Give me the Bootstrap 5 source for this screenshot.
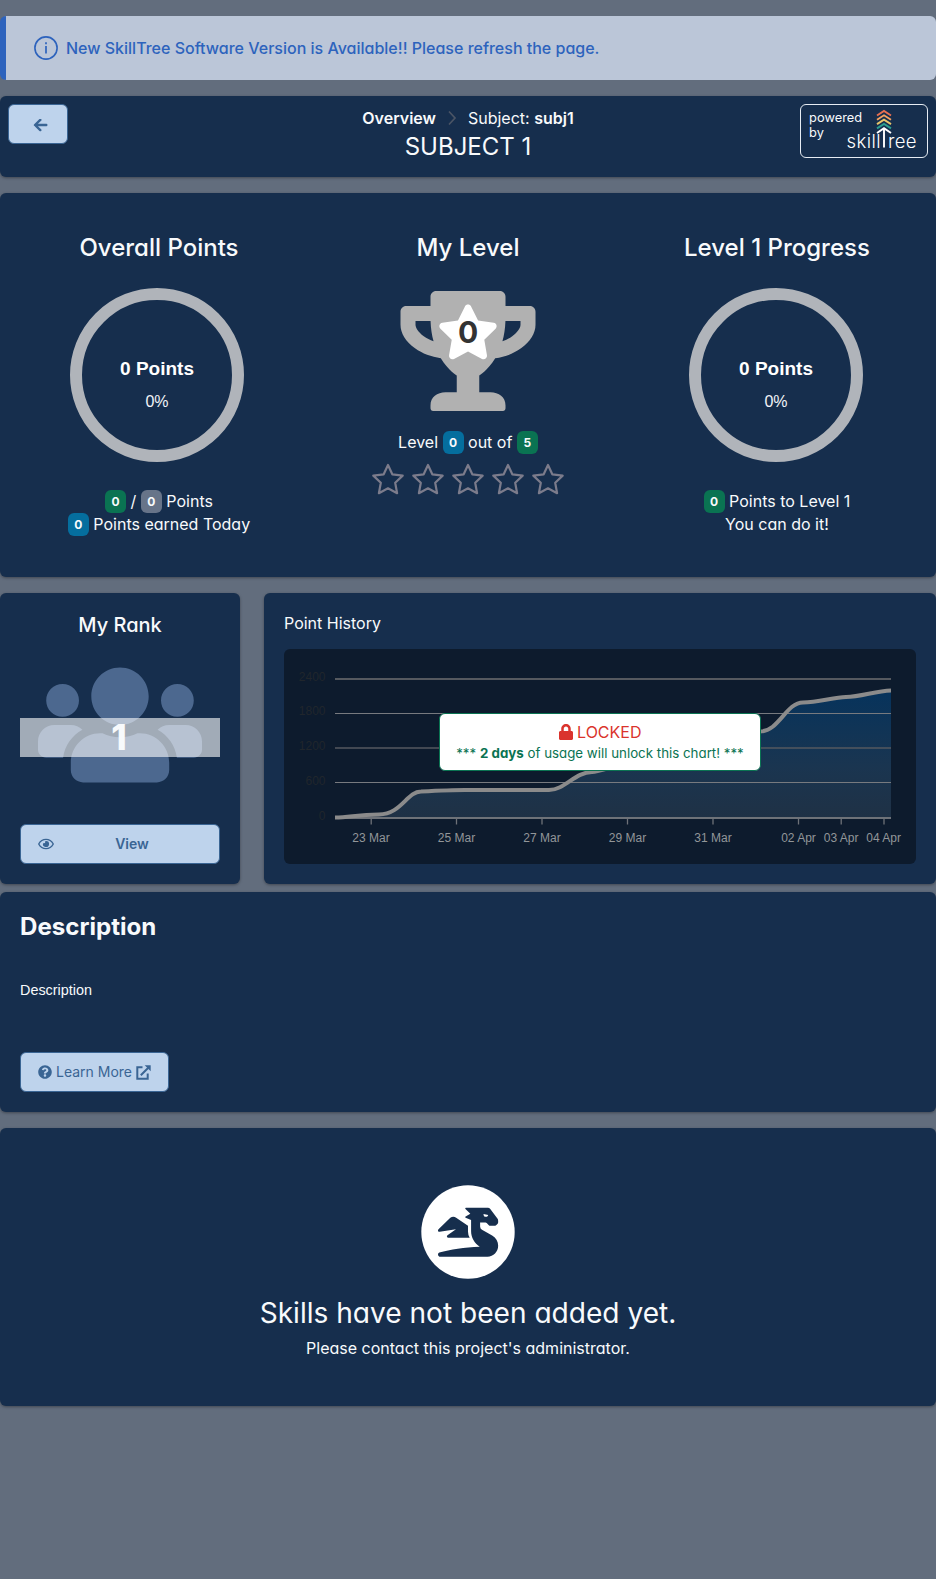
<!DOCTYPE html>
<html lang="en">
<head>
<meta charset="utf-8">
<meta name="viewport" content="width=device-width, initial-scale=1">
<title>Subject 1</title>
<link href="https://cdn.jsdelivr.net/npm/bootstrap@5.3.0/dist/css/bootstrap.min.css" rel="stylesheet">
<style>
body{background:#626d7d;color:#f8fafc;font-family:Inter,sans-serif;font-size:16px;line-height:24px;font-feature-settings:"cv11";min-height:1579px}
.panel{background:#162e4d;border-radius:6px;box-shadow:0 1px 3px rgba(0,0,0,.35)}
.notice{background:#bbc6d8;border-left:6px solid #2d63bd;border-radius:6px;color:#2d63bd;height:64px;padding-left:28px;font-weight:500}
.btn-soft{--bs-btn-bg:#bed3ec;--bs-btn-color:#3a6594;--bs-btn-border-color:#3a6594;--bs-btn-hover-bg:#a9c4e4;--bs-btn-font-size:14px;--bs-btn-border-radius:6px;height:40px;padding:0 17px;line-height:22px}
.header-side{width:128px}
.btn-back{width:60px}
.header-bar{height:81px;padding:8px}
.brand{width:128px;height:54px;border:1px solid #e6ecf3;border-radius:6px;font-size:12.800px;line-height:15px}
.brand-text{padding:5px 8px;letter-spacing:.05px}
.crumbs{height:28px}
.title{font-size:24px;line-height:30px;font-weight:400}
.stat-title{font-size:24px;line-height:32px;font-weight:500;margin-bottom:22px}
.stats{height:384px;padding-top:39px}
.ring{margin-left:66px;overflow:visible}
.stat-lines{margin-top:26px;line-height:23px}
.col-first .stat-title,.col-first .stat-lines{padding-left:6px}
.col-last .stat-title,.col-last .stat-lines{padding-right:6px}
.tag{display:inline-block;background:#0a7352;border-radius:6px;min-width:21px;height:23px;line-height:23px;font-size:12px;font-weight:700;text-align:center;vertical-align:top}
.tag-blue{background:#056e9e}.tag-gray{background:#677489}
.arial{font-family:"Liberation Sans",sans-serif}
.trophy{margin-top:27px}
.level-line{margin-top:20px;line-height:23px}
.stars{margin-top:9px}
.rank{width:240px;height:291px;padding:20px}
.rank-title{font-size:20px;line-height:24px;font-weight:500}
.rank-art{height:132px;margin-top:22px}
.rank-band{background:rgba(255,255,255,.6);height:39px;top:59px;font-size:35px;line-height:39px;font-weight:800;padding-right:2px}
.history{height:291px;padding:18px 20px}
.history-title{margin-bottom:14px}
.chart{height:215px;border-radius:6px;overflow:hidden;background:#0d1b2d}
.lockbox{background:#fff;border:1px solid #0a7352;border-radius:6px;width:322px;height:58px;left:155px;top:64px;padding-top:6px;color:#0a7352;font-size:13.320px;line-height:19px}
.lockbox .lock-title{color:#da332d;font-size:16px;line-height:24px}
.lock-icon{vertical-align:-2px}
.desc{height:220px;padding:20px;margin-top:8px}
.desc-title{font-size:24.100px;line-height:30px}
.desc-text{font-size:14.400px;margin:36px 0 0}
.empty{height:278px;padding-top:57px}
.empty-title{font-size:28.080px;line-height:36px;font-weight:400;margin:16px 0 5px}
</style>
</head>
<body>
<main class="d-flex flex-column pt-3">
<div class="notice d-flex align-items-center mb-3">
<svg width="24" height="24" viewBox="0 0 24 24" fill="none" stroke="currentColor" stroke-width="1.6"><circle cx="12" cy="12" r="11.1"/><path d="M12 10v7.5M12 6.3v1.9" stroke-width="1.7"/></svg>
<span class="ms-2">New SkillTree Software Version is Available!! Please refresh the page.</span>
</div>

<header class="panel header-bar d-flex align-items-start justify-content-between mb-3">
<div class="header-side"><button class="btn btn-soft btn-back d-inline-flex align-items-center justify-content-center" aria-label="Back">
<svg class="ms-1 mt-1" width="15" height="14" viewBox="0 0 15 14" fill="none" stroke="currentColor" stroke-width="2.4" stroke-linecap="round" stroke-linejoin="round"><path d="M13.3 6H2.200M7.300 .9 2 6l5.300 5.100"/></svg></button></div>
<div class="text-center">
<div class="crumbs d-flex align-items-center justify-content-center"><span class="fw-semibold">Overview</span>
<svg class="mx-2" width="16" height="16" viewBox="0 0 16 16" fill="none" stroke="#4b5565" stroke-width="1.7"><path d="m5 1.5 6 6.5-6 6.5"/></svg>
<span>Subject: <span class="fw-semibold">subj1</span></span></div>
<h1 class="title m-0">SUBJECT 1</h1>
</div>
<div class="brand position-relative"><div class="brand-text">powered<br>by</div>
<svg class="position-absolute top-0 start-0" width="126" height="52" viewBox="0 0 126 52" fill="none">
<g stroke-width="1.9"><path stroke="#e76f51" d="m76 10.500 7-4.500 7 4.500"/><path stroke="#f4a261" d="m76 14.800 7-4.500 7 4.500"/><path stroke="#e9c46a" d="m76 19.100 7-4.500 7 4.500"/><path stroke="#2a9d8f" d="m76 23.400 7-4.500 7 4.500"/><path stroke="#fff" d="m76 28 7-4.800 7 4.800M83 24v18.500"/></g>
<g fill="#fff" font-family="Inter" font-weight="300" font-size="18.500"><text x="45.500" y="42.500" textLength="34">skill</text><text x="87" y="42.500" textLength="28.500">ree</text></g></svg>
</div>
</header>

<section class="panel stats mb-3">
<div class="row g-0 text-center">
<div class="col-4 col-first">
<h2 class="stat-title">Overall Points</h2>
<svg class="d-block ring arial" width="182" height="178" viewBox="-2 0 182 178"><circle cx="89" cy="89" r="81" fill="none" stroke="#b0b4ba" stroke-width="12"/><text x="89" y="89" text-anchor="middle" font-size="19" font-weight="700" fill="#fff">0 Points</text><text x="89" y="120.500" text-anchor="middle" font-size="16" fill="#f1f4f8">0%</text></svg>
<div class="stat-lines"><span class="tag">0</span> / <span class="tag tag-gray">0</span> Points<br><span class="tag tag-blue">0</span> Points earned Today</div>
</div>
<div class="col-4">
<h2 class="stat-title mb-0">My Level</h2>
<svg class="d-block mx-auto trophy" width="136" height="120" viewBox="0 0 136 120"><path transform="translate(.5)scale(.2344)" fill="#b1b1b1" d="M552 64H448V24c0-13.300-10.700-24-24-24H152c-13.300 0-24 10.700-24 24v40H24C10.700 64 0 74.700 0 88v56c0 35.700 22.500 72.400 61.900 100.700 31.500 22.700 69.800 37.100 110 41.700C203.300 338.500 240 360 240 360v72h-48c-35.300 0-64 20.700-64 56v12c0 6.600 5.400 12 12 12h296c6.600 0 12-5.400 12-12v-12c0-35.300-28.700-56-64-56h-48v-72s36.700-21.500 68.100-73.600c40.300-4.600 78.600-19 110-41.700 39.300-28.300 61.900-65 61.900-100.700V88c0-13.300-10.700-24-24-24zM99.300 192.800C74.900 175.200 64 155.600 64 144v-16h64.200c1 32.600 5.800 61.200 12.800 86.200-15.100-5.200-29.200-12.400-41.700-21.400zM512 144c0 16.100-17.700 36.100-35.300 48.800-12.500 9-26.700 16.200-41.800 21.400 7-25 11.800-53.600 12.800-86.200H512v16z"/><path transform="translate(37.200 13.500)scale(.107)" fill="#fff" d="M259.300 17.800L194 150.200 47.900 171.500c-26.200 3.800-36.700 36.100-17.700 54.600l105.700 103-25 145.500c-4.500 26.300 23.200 46 46.400 33.700L288 439.600l130.700 68.700c23.200 12.200 50.900-7.400 46.400-33.700l-25-145.500 105.700-103c19-18.500 8.500-50.800-17.700-54.600L382 150.200 316.700 17.800c-11.700-23.600-45.600-23.900-57.400 0z"/><text x="68" y="51.500" text-anchor="middle" font-size="30" font-weight="700" fill="#333">0</text></svg>
<div class="level-line">Level <span class="tag tag-blue">0</span> out of <span class="tag">5</span></div>
<svg class="stars" width="192" height="32" viewBox="0 0 192 32" fill="none" stroke="#7b7b8b" stroke-width="2.200" stroke-linejoin="round"><defs><path id="st" d="m16 2 4.300 9.300 10.400 1.300-7.500 7.200 1.900 10.400L16 25.300l-9.100 4.900 1.900-10.400L1.300 12.600l10.400-1.300z"/></defs><use href="#st"/><use href="#st" x="40"/><use href="#st" x="80"/><use href="#st" x="120"/><use href="#st" x="160"/></svg>
</div>
<div class="col-4 col-last">
<h2 class="stat-title">Level 1 Progress</h2>
<svg class="d-block ring arial" width="182" height="178" viewBox="3 0 182 178"><circle cx="89" cy="89" r="81" fill="none" stroke="#b0b4ba" stroke-width="12"/><text x="89" y="89" text-anchor="middle" font-size="19" font-weight="700" fill="#fff">0 Points</text><text x="89" y="120.500" text-anchor="middle" font-size="16" fill="#f1f4f8">0%</text></svg>
<div class="stat-lines"><span class="tag">0</span> Points to Level 1<br>You can do it!</div>
</div>
</div>
</section>

<div class="d-flex gap-4">
<section class="panel rank text-center d-flex flex-column">
<h3 class="rank-title m-0">My Rank</h3>
<div class="rank-art position-relative">
<svg width="164" height="132" viewBox="0 0 640 512" fill="#4c688f" class="d-block mx-auto"><path d="M96 224c35.300 0 64-28.700 64-64s-28.700-64-64-64-64 28.700-64 64 28.700 64 64 64zm448 0c35.300 0 64-28.700 64-64s-28.700-64-64-64-64 28.700-64 64 28.700 64 64 64zm32 32h-64c-17.600 0-33.500 7.100-45.100 18.600 40.300 22.100 68.900 62 75.100 109.400h66c17.700 0 32-14.300 32-32v-32c0-35.300-28.700-64-64-64zm-256 0c61.900 0 112-50.100 112-112S381.900 32 320 32 208 82.100 208 144s50.100 112 112 112zm76.800 32h-8.300c-20.800 10-43.900 16-68.500 16s-47.600-6-68.500-16h-8.300C179.600 288 128 339.600 128 403.200V432c0 26.500 21.500 48 48 48h288c26.500 0 48-21.500 48-48v-28.800c0-63.600-51.600-115.200-115.200-115.200zm-223.700-13.400C161.500 263.100 145.600 256 128 256H64c-35.300 0-64 28.700-64 64v32c0 17.700 14.300 32 32 32h65.900c6.300-47.400 34.900-87.300 75.200-109.400z"/></svg>
<div class="rank-band position-absolute start-0 w-100">1</div>
</div>
<button class="btn btn-soft w-100 d-flex align-items-center mt-auto fw-semibold"><svg width="16" height="14" viewBox="0 0 576 512" fill="currentColor"><path d="M288 144a110.940 110.940 0 0 0-31.240 5 55.400 55.400 0 0 1 7.240 27 56 56 0 0 1-56 56 55.400 55.400 0 0 1-27-7.240A111.710 111.710 0 1 0 288 144zm284.520 97.400C518.290 135.590 410.930 64 288 64S57.680 135.640 3.480 241.410a32.350 32.350 0 0 0 0 29.190C57.710 376.410 165.070 448 288 448s230.320-71.640 284.520-177.410a32.350 32.350 0 0 0 0-29.190zM288 400c-98.650 0-189.090-55-237.930-144C98.910 167 189.340 112 288 112s189.090 55 237.930 144C477.100 345 386.660 400 288 400z"/></svg><span class="flex-grow-1 ms-2">View</span></button>
</section>
<section class="panel history flex-grow-1">
<div class="history-title">Point History</div>
<div class="chart position-relative">
<svg class="arial d-block" width="632" height="215" viewBox="0 0 632 215" font-size="12">
<defs><linearGradient id="area" x1="0" y1="0" x2="0" y2="1"><stop offset="0" stop-color="#06335c"/><stop offset=".6" stop-color="#1a3550"/><stop offset="1" stop-color="#1f3145"/></linearGradient></defs>
<path fill="url(#area)" d="M51 168.500c15 0 22-3 44-3s28-23 42-23c20-1 32-1.500 44-1.500h84c16 0 26-18 43-18 25-2 100-40.500 168-40.500 19 0 26-29 43-29 15 0 30-5 43-5.500 15 0 29-6 45-6.500V169H51z"/>
<g fill="none" stroke="#55595f" stroke-width="1"><path stroke-width="2" d="M51 30h556"/><path stroke="#777a7f" d="M51 64.500h556M51 133.500h556"/><path stroke-width="1.500" d="M51 99h556"/><path stroke="#6e7278" stroke-width="2" d="M51 169h556"/><path stroke="#6e7278" stroke-width="1.300" d="M87.200 170v5.500M172.500 170v5.500M258 170v5.500M343.500 170v5.500M429 170v5.500M514.500 170v5.500M557.200 170v5.500M600 170v5.500"/></g>
<path fill="none" stroke="#8b8b8b" stroke-width="4" d="M51 168.500c15 0 22-3 44-3s28-23 42-23c20-1 32-1.500 44-1.500h84c16 0 26-18 43-18 25-2 100-40.500 168-40.500 19 0 26-29 43-29 15 0 30-5 43-5.500 15 0 29-6 45-6.500"/>
<g fill="#20262c" text-anchor="end"><text x="41.500" y="31.500">2400</text><text x="41.500" y="66.300">1800</text><text x="41.500" y="101.300">1200</text><text x="41.500" y="135.500">600</text><text x="41.500" y="170.500">0</text></g>
<g fill="#929699" text-anchor="middle"><text x="87" y="193">23 Mar</text><text x="172.500" y="193">25 Mar</text><text x="258" y="193">27 Mar</text><text x="343.500" y="193">29 Mar</text><text x="429" y="193">31 Mar</text><text x="514.500" y="193">02 Apr</text><text x="557.200" y="193">03 Apr</text><text x="599.700" y="193">04 Apr</text></g>
</svg>
<div class="lockbox position-absolute text-center"><div class="lock-title"><svg class="lock-icon" width="14" height="16" viewBox="0 0 448 512" fill="currentColor"><path d="M400 224h-24v-72C376 68.200 307.800 0 224 0S72 68.200 72 152v72H48c-26.500 0-48 21.500-48 48v192c0 26.500 21.500 48 48 48h352c26.500 0 48-21.500 48-48V272c0-26.500-21.500-48-48-48zm-104 0H152v-72c0-39.700 32.300-72 72-72s72 32.300 72 72v72z"/></svg> LOCKED</div>
<div>*** <b>2 days</b> of usage will unlock this chart! ***</div></div>
</div>
</section>
</div>

<section class="panel desc mb-3 d-flex flex-column align-items-start">
<h2 class="desc-title m-0 fw-bold">Description</h2>
<p class="arial desc-text">Description</p>
<button class="btn btn-soft mt-auto d-inline-flex align-items-center gap-1"><svg width="14" height="14" viewBox="0 0 512 512" fill="currentColor"><path d="M504 256c0 136.997-111.043 248-248 248S8 392.997 8 256C8 119.083 119.043 8 256 8s248 111.083 248 248zM262.655 90c-54.497 0-89.255 22.957-116.549 63.758-3.536 5.286-2.353 12.415 2.715 16.258l34.699 26.310c5.205 3.947 12.621 3.008 16.665-2.122 17.864-22.658 30.113-35.797 57.303-35.797 20.429 0 45.698 13.148 45.698 32.958 0 14.976-12.363 22.667-32.534 33.976C247.128 238.528 216 254.941 216 296v4c0 6.627 5.373 12 12 12h56c6.627 0 12-5.373 12-12v-1.333c0-28.462 83.186-29.647 83.186-106.667 0-58.002-60.165-102-116.531-102zM256 338c-25.365 0-46 20.635-46 46 0 25.364 20.635 46 46 46s46-20.636 46-46c0-25.365-20.635-46-46-46z"/></svg><span>Learn More</span><svg width="15" height="15" viewBox="0 0 15 15" fill="none" stroke="currentColor" stroke-width="2"><path d="M6.500 2.300H1.300V13.700h10.400V8.500M4.800 10.200l7.500-7.500"/><path d="M8.700 .3h6V6.300z" fill="currentColor" stroke="none"/></svg></button>
</section>

<section class="panel empty text-center">
<svg class="d-block mx-auto" width="94" height="94" viewBox="0 0 94 94"><circle cx="47" cy="47" r="46.700" fill="#fff"/><path transform="translate(17 22.700)scale(.094)" fill="#162e4d" fill-rule="evenodd" d="M352 131l-58-24q-12-8 0-14l50-29L292 14q-8-14 6-14H530q16 0 26 13l76 103q8 11 8 25v14q0 10-8 18l-14 13q-8 7-20 7h-38q-14 0-22-10l-20-21q-4-4-12-4H448v43q0 23 20 34l108 60c43 25 64 65 64 111 0 63-50 116-113 116H15C-5 510-5 484 14 476 130 447 280 422 444 416 388 375 352 320 352 248zM484 66c0 22 9 31 26 31 16 0 22-8 24-20zM131 108c19-16 42-16 62-2l126 86v60q0 36 18 68H110c-15 0-21-15-9-26l90-66L18 256c-17 1-25-16-13-28z"/></svg>
<h2 class="empty-title">Skills have not been added yet.</h2>
<p class="m-0">Please contact this project's administrator.</p>
</section>
</main>
<script src="https://cdn.jsdelivr.net/npm/bootstrap@5.3.0/dist/js/bootstrap.bundle.min.js"></script>
</body>
</html>
